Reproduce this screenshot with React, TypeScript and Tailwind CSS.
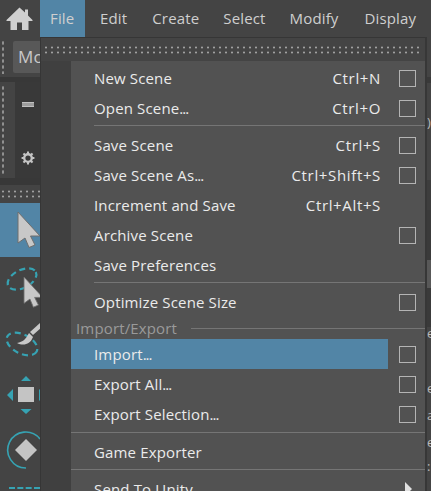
import React from "react";

const font = { fontFamily: '"Open Sans", "Noto Sans", sans-serif' };

function Check() {
  return <span className="block w-[17px] h-[17px] border border-[#b4b4b4] box-border" />;
}

function Label({ text }: { text: string }) {
  if (!text.endsWith("...")) return <span>{text}</span>;
  return (
    <span>
      {text.slice(0, -3)}
      <span className="tracking-[-1px]">...</span>
    </span>
  );
}

function Row({ label, shortcut, box, active }: { label: string; shortcut?: string; box?: boolean; active?: boolean }) {
  return (
    <div className="flex items-center h-[30px] shrink-0">
      <div className={"flex items-center flex-1 h-full pl-[23px] pr-[7px] justify-between " + (active ? "bg-[#5285a6]" : "")}>
        <Label text={label} />
        {shortcut && <span className="tracking-[0.65px]">{shortcut}</span>}
      </div>
      <div className="w-[37px] flex justify-start pl-[11px]">{box && <Check />}</div>
    </div>
  );
}

function Sep({ inset }: { inset?: boolean }) {
  return <div className={"h-[1px] mt-[2px] mb-[4px] bg-[#757575] shrink-0 " + (inset ? "ml-[23px]" : "")} />;
}

function Dots({ className }: { className?: string }) {
  return (
    <div className={"bg-[radial-gradient(#a0a0a0_1.1px,transparent_1.4px)] bg-[length:6px_5px] " + (className ?? "")} />
  );
}

function VDots({ className }: { className?: string }) {
  return (
    <div className={"w-[4px] shrink-0 bg-[radial-gradient(#909090_1px,transparent_1.3px)] bg-[length:4px_6px] " + (className ?? "")} />
  );
}

function HomeIcon() {
  return (
    <svg width="27" height="23" viewBox="0 0 27 23">
      <path d="M13.5 0.5 L19 5.5 V2.5 H22 V8.5 L26.5 13 V14 H22.5 V23 H16 V15.5 H11 V23 H4.5 V14 H0.5 V13 Z" fill="#d0d0d0" />
    </svg>
  );
}

function GearIcon() {
  return (
    <svg width="14" height="14" viewBox="0 0 24 24" fill="none" stroke="#c4c4c4">
      <circle cx="12" cy="12" r="6.5" strokeWidth="4" />
      <path d="M12 1v4M12 19v4M1 12h4M19 12h4M4.2 4.2L7 7M17 17l2.8 2.8M4.2 19.8L7 17M17 7l2.8-2.8" strokeWidth="3.5" />
    </svg>
  );
}

function Arrow({ x = 0, y = 0, scale = 1 }: { x?: number; y?: number; scale?: number }) {
  return (
    <path
      transform={`translate(${x} ${y}) scale(${scale})`}
      d="M0 0 L22 24 L12.5 24 L17 33 L11 35.5 L7 26 L0 31 Z"
      fill="#c8c8c8"
      stroke="#6e6e6e"
      strokeWidth="1"
    />
  );
}

function Tools() {
  return (
    <div className="flex flex-col">
      <div className="h-[54px] bg-[#5285a6] overflow-hidden">
        <svg width="40" height="54" viewBox="0 0 40 54"><Arrow x={18} y={9} scale={1} /></svg>
      </div>
      <div className="h-[60px] overflow-hidden">
        <svg width="40" height="60" viewBox="0 0 40 60">
          <ellipse cx="22" cy="22" rx="15.5" ry="9" transform="rotate(-27 22 22)" fill="none" stroke="#36a3b3" strokeWidth="2.2" strokeDasharray="6 4" />
          <Arrow x={24} y={20} scale={0.85} />
        </svg>
      </div>
      <div className="h-[53px] overflow-hidden">
        <svg width="40" height="53" viewBox="0 0 40 53">
          <ellipse cx="22" cy="27" rx="16.5" ry="9.5" transform="rotate(27 22 27)" fill="none" stroke="#36a3b3" strokeWidth="2.2" strokeDasharray="6 4" />
          <path d="M40 6 L30 15 L33 18 L42 10 Z" fill="#c8c8c8" />
          <path d="M29 16 C26 22 23 25 17 26 C23 29 30 28 33 20 Z" fill="#c8c8c8" />
        </svg>
      </div>
      <div className="h-[55px] overflow-hidden">
        <svg width="40" height="55" viewBox="0 0 40 55">
          <rect x="18" y="17" width="16" height="15" fill="#c4c4c4" />
          <path d="M26 6 L31 11 H21 Z M26 44 L31.5 39 H20.5 Z M7 25 L13 19 V31 Z M39 19 V31 L45 25 Z" fill="#36a3b3" />
        </svg>
      </div>
      <div className="h-[55px] overflow-hidden">
        <svg width="40" height="55" viewBox="0 0 40 55">
          <path d="M40 14 A18 18 0 1 0 26 43" fill="none" stroke="#36a3b3" strokeWidth="1.6" />
          <path d="M26 14 L37 25 L26 36 L15 25 Z" fill="#c4c4c4" />
        </svg>
      </div>
      <div className="h-[11px] overflow-hidden pt-[7px] pl-[9px]">
        <div className="h-[2px] border-t-[2px] border-dashed border-[#36a3b3]" />
      </div>
    </div>
  );
}

function RightEdge() {
  return (
    <div className="w-[6px] flex flex-col border-l-[2px] border-[#373737] bg-[#444444] overflow-hidden text-[13px] leading-none text-[#b8b8b8]">
      <div className="h-[40px] shrink-0" />
      <div className="h-[6px] shrink-0 bg-[#393939]" />
      <div className="h-[29px] shrink-0" />
      <div className="h-[20px] shrink-0 flex items-center whitespace-nowrap">)</div>
      <div className="h-[48px] shrink-0" />
      <div className="h-[30px] shrink-0 bg-[#3d3d3d]" />
      <div className="h-[50px] shrink-0 bg-[#3a3a3a]" />
      <div className="h-[28px] shrink-0 bg-[#585858]" />
      <div className="h-[39px] shrink-0 bg-[#3a3a3a]" />
      <div className="h-[16px] shrink-0 whitespace-nowrap">e</div>
      <div className="h-[39px] shrink-0" />
      <div className="h-[27px] shrink-0 whitespace-nowrap">e</div>
      <div className="h-[27px] shrink-0 whitespace-nowrap">a</div>
      <div className="h-[24px] shrink-0 whitespace-nowrap">e</div>
      <div className="h-[14px] shrink-0 whitespace-nowrap">:</div>
    </div>
  );
}

export default function App() {
  return (
    <div className="relative w-[431px] h-[491px] overflow-hidden bg-[#444444] text-[15px] tracking-[0.15px] text-[#ebebeb]" style={font}>
      {/* Top menu bar */}
      <div className="flex h-[37px] bg-[#444444]">
        <div className="w-[40px] flex items-center justify-center pr-[1px]"><HomeIcon /></div>
        <div className="flex items-center text-[#cfcfcf]">
          <span className="flex items-center h-full pl-[10px] w-[45px] bg-[#5285a6]">File</span>
          <span className="ml-[15px]">Edit</span>
          <span className="ml-[25px]">Create</span>
          <span className="ml-[24px]">Select</span>
          <span className="ml-[24px]">Modify</span>
          <span className="ml-[26px]">Display</span>
        </div>
      </div>

      <div className="flex h-[454px]">
        {/* Left shelves */}
        <div className="w-[40px] flex flex-col overflow-hidden">
          <div className="h-[40px] flex items-center bg-[#444444] pl-[1px]">
            <VDots className="h-[34px]" />
            <div className="ml-[8px] h-[32px] w-[40px] shrink-0 rounded-[2px] bg-[#585858] pl-[5px] flex items-center text-[#c8c8c8] text-[17px]">Mode</div>
          </div>
          <div className="h-[5px] bg-[#383838]" />
          <div className="h-[96px] flex bg-[#444444] pl-[1px] items-center justify-between">
            <VDots className="h-[90px]" />
            <div className="w-[25px] h-full bg-[#393939] flex flex-col items-center pt-[20px]">
              <div className="w-[12px] h-[5px] bg-[#9d9d9d] border-y border-[#c0c0c0]" />
              <div className="mt-[44px]"><GearIcon /></div>
            </div>
          </div>
          <div className="h-[7px] bg-[#383838]" />
          <div className="h-[18px] flex items-center bg-[#444444]"><Dots className="w-full h-[10px]" /></div>
          <Tools />
        </div>
        <div className="flex-1" />
        <RightEdge />
      </div>

      {/* File menu */}
      <div className="absolute left-[40px] top-[37px] w-[385px] h-[454px] flex flex-col overflow-hidden bg-[#525252] border-l border-[#363636]">
        <div className="h-[24px] shrink-0 bg-[#444444] border-t border-[#363636] flex items-center px-[2px]">
          <Dots className="w-full h-[10px]" />
        </div>
        <div className="flex flex-1">
          <div className="w-[30px] bg-[#404040] shrink-0" />
          <div className="flex flex-col flex-1 pt-[2px] min-w-0">
            <Row label="New Scene" shortcut="Ctrl+N" box />
            <Row label="Open Scene..." shortcut="Ctrl+O" box />
            <Sep inset />
            <Row label="Save Scene" shortcut="Ctrl+S" box />
            <Row label="Save Scene As..." shortcut="Ctrl+Shift+S" box />
            <Row label="Increment and Save" shortcut="Ctrl+Alt+S" />
            <Row label="Archive Scene" box />
            <Row label="Save Preferences" />
            <Sep inset />
            <Row label="Optimize Scene Size" box />
            <div className="h-[22px] shrink-0 flex items-center pl-[5px] text-[#9a9a9a]">
              <span>Import/Export</span>
              <div className="flex-1 h-[1px] bg-[#757575] ml-[14px]" />
            </div>
            <Row label="Import..." box active />
            <Row label="Export All..." box />
            <Row label="Export Selection..." box />
            <div className="h-[1px] mt-[3px] mb-[4px] bg-[#757575] shrink-0" />
            <Row label="Game Exporter" />
            <div className="h-[1px] mt-[2px] mb-[4px] bg-[#757575] shrink-0" />
            <div className="flex items-center h-[30px] pl-[23px] pr-[13px] justify-between shrink-0">
              <span>Send To Unity</span>
              <svg width="7" height="14" viewBox="0 0 7 14"><path d="M0 0 L7 7 L0 14 Z" fill="#e0e0e0" /></svg>
            </div>
          </div>
        </div>
      </div>
    </div>
  );
}
